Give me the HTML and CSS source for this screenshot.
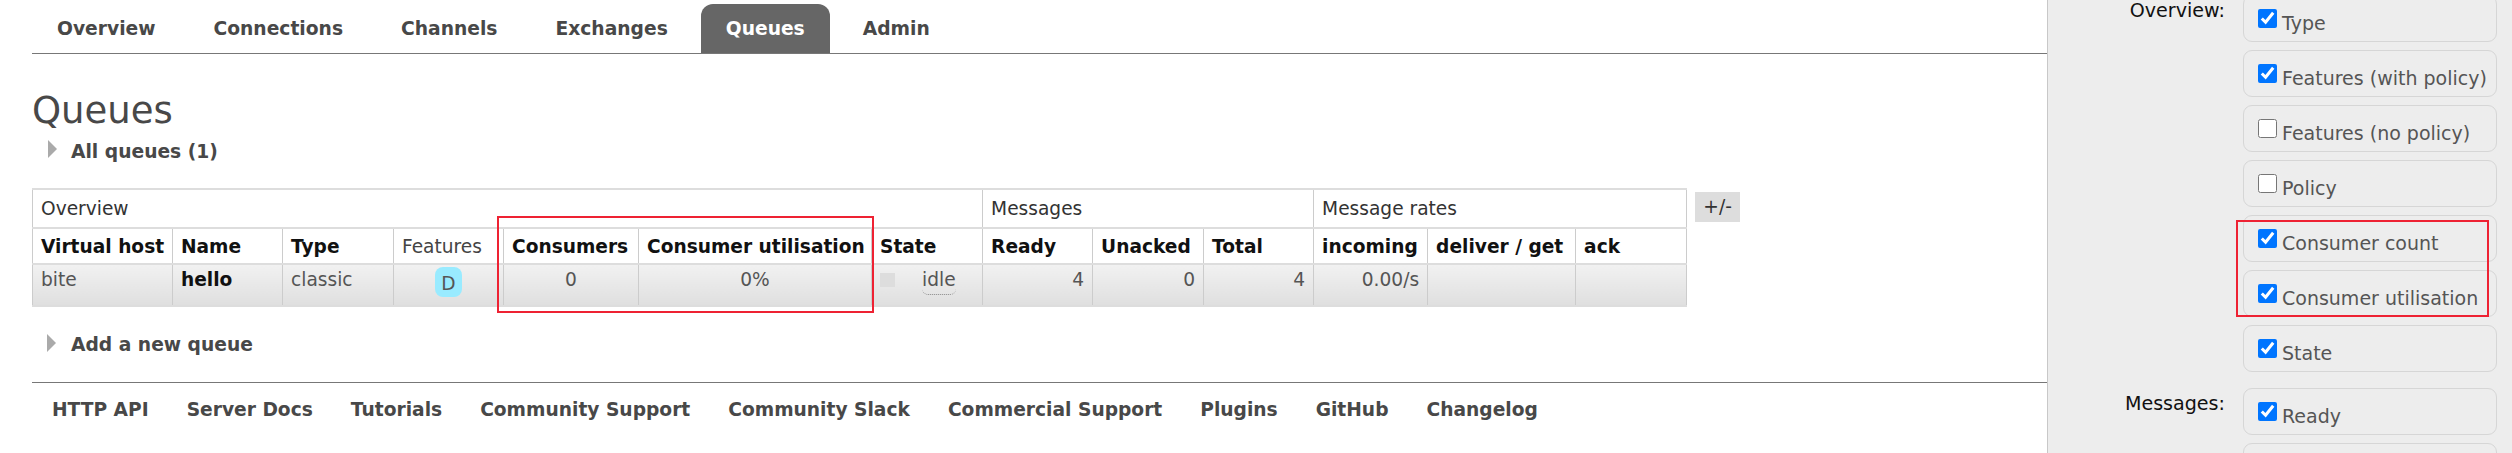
FILE: index.html
```html
<!DOCTYPE html>
<html lang="en">
<head>
<meta charset="utf-8">
<title>Queues</title>
<link rel="stylesheet" href="styles.css">
</head>
<body>
<div class="page">
  <main class="main">
    <nav class="tabs">
      <a class="tab">Overview</a>
      <a class="tab">Connections</a>
      <a class="tab">Channels</a>
      <a class="tab">Exchanges</a>
      <a class="tab tab-active">Queues</a>
      <a class="tab">Admin</a>
    </nav>
    <h1 class="title">Queues</h1>
    <div class="toggle toggle-all"><span class="arrow"></span><span class="toggle-text">All queues (1)</span></div>
    <div class="table-row">
      <table class="queues">
        <colgroup>
          <col class="c140"><col class="c110"><col class="c111"><col class="c110"><col class="c135"><col class="c233"><col class="c111">
          <col class="c110"><col class="c111"><col class="c110">
          <col class="c114"><col class="c148"><col class="c111">
        </colgroup>
        <thead>
          <tr class="groups">
            <th colspan="7">Overview</th>
            <th colspan="3">Messages</th>
            <th colspan="3">Message rates</th>
          </tr>
          <tr class="heads">
            <th>Virtual host</th><th>Name</th><th>Type</th><th class="plain">Features</th><th>Consumers</th><th>Consumer utilisation</th><th>State</th>
            <th>Ready</th><th>Unacked</th><th>Total</th>
            <th>incoming</th><th>deliver / get</th><th>ack</th>
          </tr>
        </thead>
        <tbody>
          <tr class="data">
            <td>bite</td>
            <td class="strong">hello</td>
            <td>classic</td>
            <td class="center"><span class="badge">D</span></td>
            <td class="center">0</td>
            <td class="center">0%</td>
            <td><div class="state"><span class="state-dot"></span><span class="state-text">idle</span></div></td>
            <td class="right">4</td>
            <td class="right">0</td>
            <td class="right">4</td>
            <td class="right">0.00/s</td>
            <td></td>
            <td></td>
          </tr>
        </tbody>
      </table>
      <span class="plus-minus">+/-</span>
    </div>
    <div class="toggle toggle-add"><span class="arrow"></span><span class="toggle-text">Add a new queue</span></div>
    <footer class="foot">
      <a>HTTP API</a><a>Server Docs</a><a>Tutorials</a><a>Community Support</a><a>Community Slack</a><a>Commercial Support</a><a>Plugins</a><a>GitHub</a><a>Changelog</a>
    </footer>
  </main>
  <aside class="panel">
    <div class="group">
      <div class="group-label">Overview:</div>
      <div class="options">
        <label class="option"><input type="checkbox" checked><span>Type</span></label>
        <label class="option"><input type="checkbox" checked><span>Features (with policy)</span></label>
        <label class="option"><input type="checkbox"><span>Features (no policy)</span></label>
        <label class="option"><input type="checkbox"><span>Policy</span></label>
        <label class="option"><input type="checkbox" checked><span>Consumer count</span></label>
        <label class="option"><input type="checkbox" checked><span>Consumer utilisation</span></label>
        <label class="option"><input type="checkbox" checked><span>State</span></label>
      </div>
    </div>
    <div class="group">
      <div class="group-label">Messages:</div>
      <div class="options">
        <label class="option"><input type="checkbox" checked><span>Ready</span></label>
        <label class="option"></label>
      </div>
    </div>
  </aside>
  <div class="mark mark-table"></div>
  <div class="mark mark-panel"></div>
</div>
</body>
</html>
```
FILE: styles.css
```css
* { box-sizing: border-box; }
html, body { margin: 0; padding: 0; background: #fff; }
body { font-family: "DejaVu Sans", sans-serif; font-size: 18.6px; color: #484848; overflow: hidden; }
.page { position: relative; display: flex; width: 2512px; height: 453px; overflow: hidden; }

.main { width: 2047px; padding-left: 32px; flex: none; }

.tabs { display: flex; gap: 8px; height: 54px; padding-top: 4px; border-bottom: 1px solid #777; }
.tab { height: 49px; padding: 0 25px; font-size: 18.7px; font-weight: 700; line-height: 50px; color: #484848; border-radius: 12px 12px 0 0; }
.tab-active { background: #666; color: #fff; }

.title { margin: 35px 0 0; font-size: 37px; font-weight: 400; line-height: 44px; color: #484848; }

.toggle { display: flex; align-items: center; font-size: 18.7px; font-weight: 700; }
.toggle-all { height: 26px; margin-top: 5px; padding-left: 16px; }
.toggle-all .arrow { margin-right: 14px; }
.toggle-add { height: 26px; margin-top: 25px; padding-left: 15px; }
.arrow { width: 0; height: 0; border-style: solid; border-width: 9px 0 9px 9px; border-color: transparent transparent transparent #aaa; margin-right: 15px; margin-top: -4px; }

.table-row { display: flex; align-items: flex-start; gap: 8px; margin-top: 24px; }
.queues { width: 1654px; table-layout: fixed; border-collapse: collapse; border-top: 2px solid #ddd; border-left: 1px solid #ccc; border-right: 1px solid #ccc; border-bottom: 2px solid #ddd; font-size: 18.6px; }
.c140 { width: 140px; } .c110 { width: 110px; } .c111 { width: 111px; } .c135 { width: 135px; }
.c233 { width: 233px; } .c114 { width: 114px; } .c148 { width: 148px; }
.queues th, .queues td { padding: 0 8px; text-align: left; white-space: nowrap; border-left: 1px solid #ccc; }
.queues th:first-child, .queues td:first-child { border-left: 0; }
.groups th { height: 38.5px; font-weight: 400; color: #333; border-bottom: 2px solid #ddd; }
.heads th { height: 36px; padding-top: 2px; font-weight: 700; color: #111; border-bottom: 2px solid #ddd; }
.heads .plain { font-weight: 400; color: #444; }
.data td { height: 42px; padding-top: 4px; padding-bottom: 0; vertical-align: top; line-height: 22px; color: #555; background: linear-gradient(#f1f1f1, #dfdfdf); }
.queues .strong { font-weight: 700; color: #111; }
.queues .center { text-align: center; }
.queues .right { text-align: right; }
.badge { display: inline-block; width: 27px; height: 30px; margin-top: -2px; line-height: 33px; background: #99ebff; border-radius: 8px; color: #555; }
.state { display: flex; align-items: flex-start; }
.state-dot { width: 15px; height: 14px; margin-top: 4px; background: #ddd; }
.state-text { margin-left: 27px; height: 26px; border-bottom: 1px dotted #888; border-radius: 0 0 6px 6px; }
.plus-minus { margin-top: 4px; width: 45px; height: 30px; background: #ddd; color: #333; text-align: center; line-height: 30px; }

.foot { display: flex; gap: 38px; height: 71px; margin-top: 24px; padding: 14px 0 0 20px; border-top: 1px solid #777; font-size: 18.65px; font-weight: 700; line-height: 26px; color: #484848; }

.panel { flex: 1; height: 453px; overflow: hidden; background: #ededed; border-left: 1px solid #c8c8c8; padding: 0 16px 0 0; }
.group { display: grid; grid-template-columns: 177px 254px; column-gap: 18px; margin-bottom: 16px; }
.group:first-child { margin-top: -5px; }
.group-label { text-align: right; color: #111; font-size: 19.1px; line-height: 22px; padding-top: 5px; }
.options { display: flex; flex-direction: column; gap: 8px; }
.option { display: flex; align-items: flex-start; height: 47px; padding: 13px 0 0 14px; border: 1px solid #d6d6d6; border-radius: 9px; color: #555; font-size: 19px; line-height: 22px; }
.option input { flex: none; width: 19px; height: 19px; margin: 0 5px 0 0; accent-color: #0075ff; }
.option span { margin-top: 3px; }

.mark { position: absolute; border: 2px solid #ee2233; }
.mark-table { left: 497px; top: 216px; width: 377px; height: 97px; }
.mark-panel { left: 2236px; top: 220px; width: 253px; height: 97px; }
```
